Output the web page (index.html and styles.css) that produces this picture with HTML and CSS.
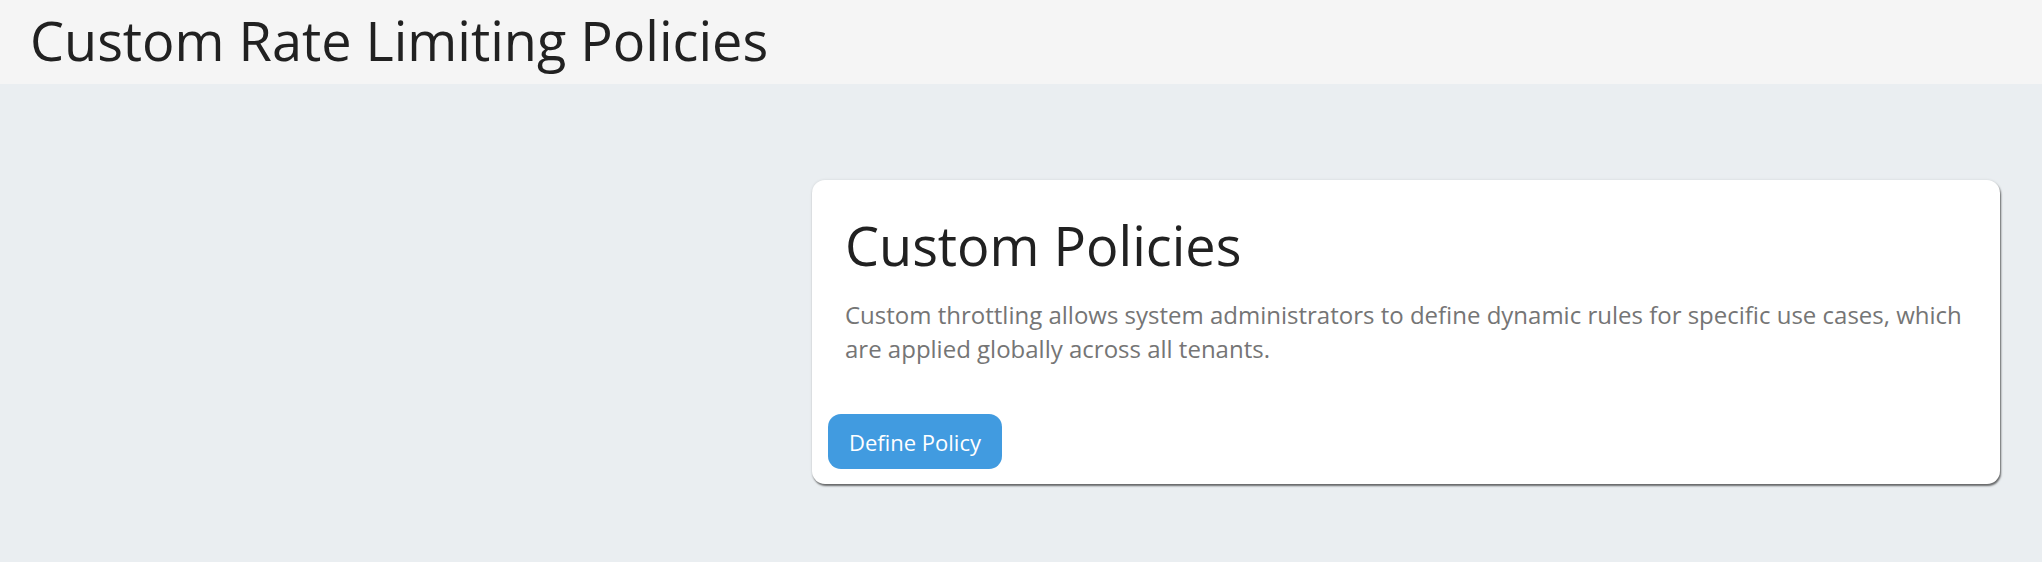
FILE: index.html
```html
<!DOCTYPE html>
<html lang="en">
<head>
<meta charset="utf-8">
<title>Custom Rate Limiting Policies</title>
<link rel="stylesheet" href="styles.css">
</head>
<body>
  <header class="page-header">
    <h1 class="page-title">Custom Rate Limiting Policies</h1>
  </header>
  <main class="page-main">
    <div class="spacer"></div>
    <section class="card">
      <div class="card-body">
        <h2 class="card-title">Custom Policies</h2>
        <p class="card-text">Custom throttling allows system administrators to define dynamic rules for specific use cases, which are applied globally across all tenants.</p>
      </div>
      <div class="card-footer">
        <button class="btn-primary" type="button">Define Policy</button>
      </div>
    </section>
  </main>
</body>
</html>
```
FILE: styles.css
```css
html, body {
  margin: 0;
  padding: 0;
}

body {
  background: #eaeef1;
  font-family: "Open Sans", "Noto Sans", "Liberation Sans", sans-serif;
  color: #212121;
  min-height: 562px;
}

.page-header {
  background: #f5f5f5;
  height: 84px;
  box-sizing: border-box;
  padding: 4px 0 0 30px;
}

.page-title {
  margin: 0;
  font-size: 54px;
  font-weight: 400;
  line-height: 72px;
  color: #212121;
}

.page-main {
  display: grid;
  grid-template-columns: 1fr 1188px;
  padding: 96px 42px 0 0;
}

.card {
  background: #ffffff;
  border-radius: 13px;
  box-shadow: 0 0 3px rgba(0, 0, 0, 0.10), 1px 2px 2px rgba(0, 0, 0, 0.55);
}

.card-body {
  padding: 33px 33px 32px;
}

.card-title {
  margin: 0;
  font-size: 54px;
  font-weight: 400;
  line-height: 64px;
  color: #212121;
}

.card-text {
  margin: 21px 0 0;
  font-size: 24px;
  line-height: 34px;
  color: #757575;
}

.card-footer {
  padding: 16px 16px 15px;
}

.btn-primary {
  font-family: inherit;
  font-size: 22px;
  line-height: 30px;
  color: #ffffff;
  background: #419be0;
  border: none;
  border-radius: 13px;
  padding: 13px 21px 12px;
  cursor: pointer;
}
```
